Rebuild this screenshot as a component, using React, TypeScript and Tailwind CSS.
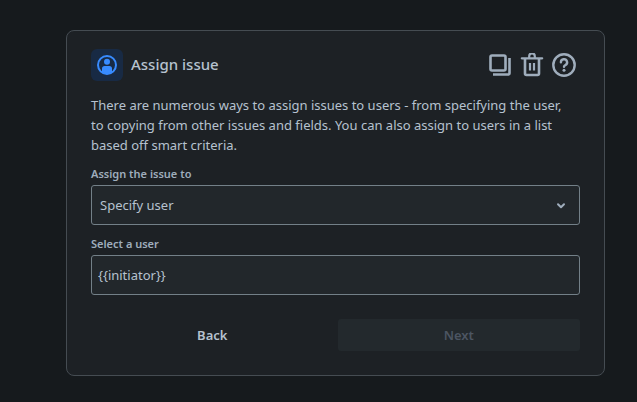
import { useState } from "react"
import type { ReactNode } from "react"

interface IconButtonProps {
  label: string
  children: ReactNode
}

function IconButton({ label, children }: IconButtonProps) {
  return (
    <button type="button" aria-label={label} className="flex h-8 w-8 items-center justify-center text-[#9fadbc]">
      {children}
    </button>
  )
}

function UserIcon() {
  return (
    <svg viewBox="0 0 24 24" className="h-6 w-6" aria-hidden="true">
      <circle cx="12" cy="12" r="9" fill="none" stroke="#388bff" strokeWidth="2" />
      <circle cx="12" cy="8.8" r="3" fill="#388bff" />
      <path d="M7 19v-3.4C7 14 8 13 9.500 13h5c1.500 0 2.500 1 2.500 2.600V19c-3 2.200-7 2.200-10 0z" fill="#388bff" />
    </svg>
  )
}

function CopyIcon() {
  return (
    <svg viewBox="0 0 24 24" className="h-6 w-6" fill="none" stroke="currentColor" strokeWidth="2.6" aria-hidden="true">
      <rect x="2.500" y="2.500" width="15" height="15" rx="1.500" />
      <path d="M21.500 5v15a1.500 1.500 0 0 1-1.500 1.500H5" />
    </svg>
  )
}

function TrashIcon() {
  return (
    <svg viewBox="0 0 24 24" className="h-6 w-6" fill="none" stroke="currentColor" strokeWidth="2.600" aria-hidden="true">
      <path d="M1.800 5.300h20.400" strokeLinecap="round" strokeWidth="2.200" />
      <path d="M9.200 5V3.200a2.800 2.800 0 0 1 5.600 0V5" strokeWidth="2.200" />
      <path d="M5 6v14.500a1.500 1.500 0 0 0 1.500 1.500h11a1.500 1.500 0 0 0 1.500-1.500V6" />
      <path d="M10 10v7.500M14 10v7.500" strokeWidth="2.200" />
    </svg>
  )
}

function HelpIcon() {
  return (
    <svg viewBox="0 0 24 24" className="h-6 w-6" fill="none" stroke="currentColor" strokeWidth="2.400" aria-hidden="true">
      <circle cx="12" cy="12" r="10.700" />
      <path d="M8.900 9.300a3.100 3.100 0 1 1 4.500 2.800c-.9.450-1.400.8-1.400 1.700" strokeWidth="2.400" strokeLinecap="round" />
      <circle cx="12" cy="17.200" r="1.500" fill="currentColor" stroke="none" />
    </svg>
  )
}

export default function App() {
  const [mode, setMode] = useState("specify")
  const [user, setUser] = useState("{{initiator}}")

  return (
    <div className="min-h-screen bg-[#161a1d] pt-[30px] pr-8 pb-6 pl-[66px] font-['Noto_Sans',sans-serif] text-sm text-[#b6c2cf]">
      <form
        className="rounded-lg border border-[#454c52] bg-[#1d2125] px-6 pt-[18px] pb-6"
        onSubmit={(e) => e.preventDefault()}
      >
        <header className="flex items-center">
          <span className="flex h-8 w-8 items-center justify-center rounded-md bg-[#182a44]">
            <UserIcon />
          </span>
          <h1 className="ml-2 text-[15px] font-medium">Assign issue</h1>
          <div className="ml-auto flex">
            <IconButton label="Duplicate">
              <CopyIcon />
            </IconButton>
            <IconButton label="Delete">
              <TrashIcon />
            </IconButton>
            <IconButton label="Help">
              <HelpIcon />
            </IconButton>
          </div>
        </header>

        <p className="mt-3.5 pr-3 text-[13px] leading-5">
          There are numerous ways to assign issues to users - from specifying the user, to copying from other issues and
          fields. You can also assign to users in a list based off smart criteria.
        </p>

        <label htmlFor="assign-mode" className="mt-[11px] block text-[11px] leading-4 font-semibold text-[#9fadbc]">
          Assign the issue to
        </label>
        <div className="relative mt-[3px]">
          <select
            id="assign-mode"
            value={mode}
            onChange={(e) => setMode(e.target.value)}
            className="h-10 w-full appearance-none rounded-[3px] border border-[#738088] bg-[#22272b] px-2 text-[13px]"
          >
            <option value="specify">Specify user</option>
          </select>
          <svg
            viewBox="0 0 10 10"
            className="pointer-events-none absolute top-4 right-3.5 h-2.5 w-2.5"
            fill="none"
            stroke="#9fadbc"
            strokeWidth="2"
            strokeLinecap="round"
            strokeLinejoin="round"
            aria-hidden="true"
          >
            <path d="M2 3.200l3 3 3-3" />
          </svg>
        </div>

        <label htmlFor="assign-user" className="mt-[11px] block text-[11px] leading-4 font-semibold text-[#9fadbc]">
          Select a user
        </label>
        <input
          id="assign-user"
          type="text"
          value={user}
          onChange={(e) => setUser(e.target.value)}
          className="mt-[3px] block h-10 w-full rounded-[3px] border border-[#738088] bg-[#22272b] px-1.5 text-[13px]"
        />

        <div className="mt-6 grid grid-cols-2 gap-1 text-[13px] font-semibold">
          <button type="button" className="h-8 rounded-[3px]">
            Back
          </button>
          <button type="submit" disabled className="h-8 rounded-[3px] bg-[#23292d] text-[#4c5562]">
            Next
          </button>
        </div>
      </form>
    </div>
  )
}
